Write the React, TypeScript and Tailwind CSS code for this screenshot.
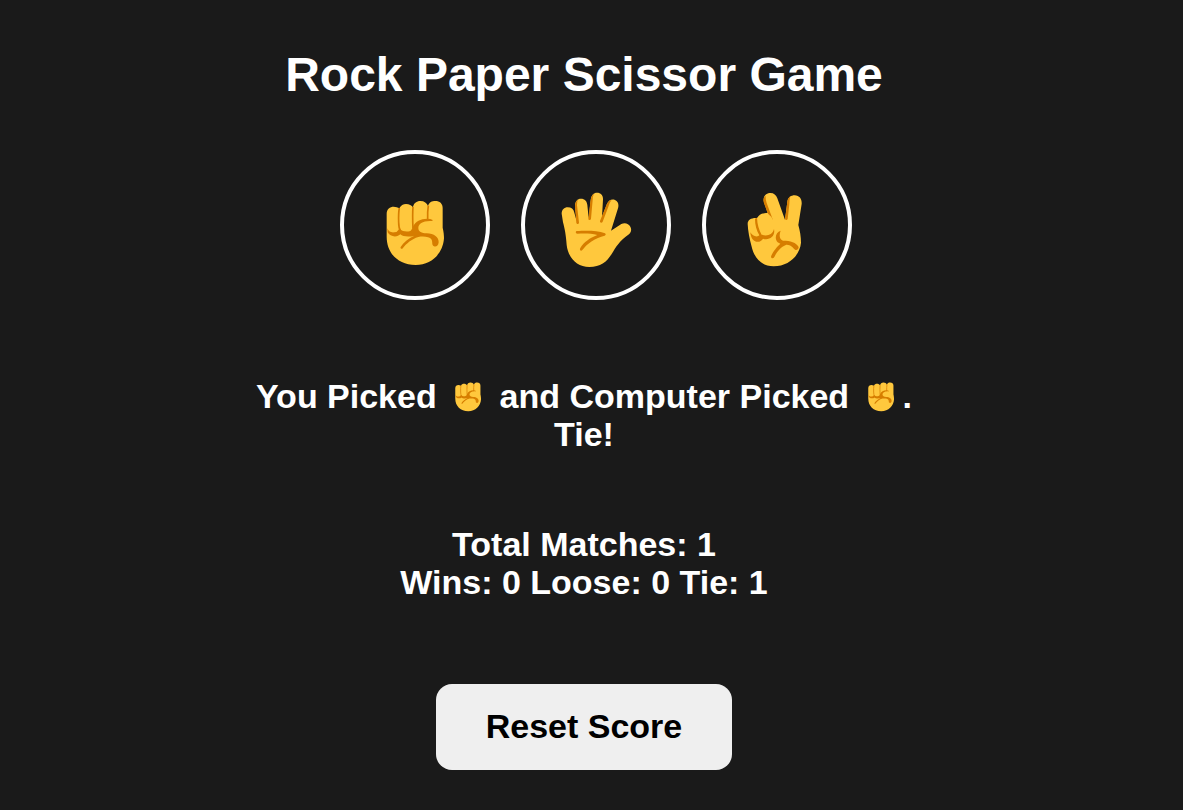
import { useState } from "react";

type Move = "rock" | "paper" | "scissor";

const MOVES: Move[] = ["rock", "paper", "scissor"];

const BEATS: Record<Move, Move> = { rock: "scissor", paper: "rock", scissor: "paper" };

function Rock() {
  return (
    <>
      <path
        fill="#ffc83d"
        d="M155 207C155 192 165 185 176 185Q186 185 193 190C197 181 205 177 213 177C223 177 230 181 234 187C235 175 245 168 256 168C268 168 276 174 279 183C282 172 291 168 301 168C314 168 323 176 323 189L323 248C326 260 327 272 327 280C324 325 290 360 242 360C190 360 155 325 155 275Z"
      />
      <path
        fill="none"
        stroke="#d67d00"
        strokeWidth="5"
        d="M193 189Q190 205 191 232Q191 250 197 260M234 186Q232 210 234 250M280 182Q277 200 278 226"
      />
      <path
        fill="#d67d00"
        d="M157 250C160 260 168 263 178 262Q187 262 192 253L196 253C202 261 225 262 229 255L235 243C242 230 256 221 277 221Q287 221 293 225L292 228C265 226 250 235 250 249C250 260 260 265 275 265C297 265 312 277 311 292C310 303 303 306 297 304C289 301 294 291 289 283C284 275 265 273 250 276C230 282 215 295 202 311C199 313 195 309 197 306C205 292 220 280 238 272C222 277 203 275 196 268C188 277 165 277 158 262Z"
      />
    </>
  );
}

function Paper() {
  return (
    <>
      <path
        fill="#ffc83d"
        d="M137 206C137 194 145 187 155 187C166 187 173 192 175 203L182 228L177 183C177 169 184 161 195 161C206 161 213 168 214 180L218 220L224 165C226 150 233 143 243 143C255 143 262 152 261 164L258 215L273 176C278 166 287 161 297 165C307 169 309 179 306 190L285 257L316 237C327 231 338 236 343 245C348 254 345 263 337 269C311 287 300 305 287 327C272 351 253 366 220 366C182 366 156 337 152 300C150 270 146 250 141 232Z"
      />
      <path
        fill="#d67d00"
        d="M186 164C178 169 177 178 177 188L181 233C182 238 188 238 189 233L183 181Q182 171 186 164ZM234 146C226 151 225 160 223 172L217 221C217 226 224 226 225 221L230 165Q230 153 234 146ZM287 164C278 167 274 173 271 181L252 228C251 234 258 235 260 230L277 185Q280 173 287 164Z"
      />
      <path
        fill="#d67d00"
        d="M183 258C205 257 242 255 267 265Q272 269 266 272C238 279 214 295 199 315C195 320 189 315 193 309C204 291 221 279 244 270C223 264 202 265 184 266C178 266 178 258 183 258Z"
      />
    </>
  );
}

function Scissor() {
  return (
    <>
      <path
        fill="#ffc83d"
        d="M152 237C152 224 163 218 180 219C187 208 195 204 212 204L201 172C196 155 207 144 220 144C231 144 237 150 241 160L264 224L271 170C273 157 282 151 293 151C308 152 315 162 314 177L304 240C309 258 312 275 312 293C308 332 275 364 230 364C195 364 172 340 164 305C157 280 153 258 152 237Z"
      />
      <path
        fill="#d67d00"
        d="M206 152C197 160 199 170 202 178L213 206Q224 213 229 228L209 174Q205 162 206 152ZM280 154C272 160 271 169 270 179L264 223Q269 227 272 222L277 178Q277 164 280 154ZM174 221L180 218C181 239 186 254 193 268L188 272C178 256 174 239 174 221Z"
      />
      <path
        fill="#d67d00"
        d="M160 262C168 277 185 278 190 267C204 275 226 273 231 252C236 275 216 287 198 281C190 296 162 296 160 262ZM251 257C237 261 231 280 242 292L250 296C240 305 226 322 222 335C223 341 229 341 232 336C240 320 250 306 268 299C280 298 288 308 294 314C300 317 305 312 305 306C298 292 280 287 258 287C245 282 247 267 251 257Z"
      />
    </>
  );
}

function Hand({ move, className }: { move: Move; className: string }) {
  return (
    <svg viewBox="120 132 240 240" className={className} role="img" aria-label={move}>
      {move === "rock" && <Rock />}
      {move === "paper" && <Paper />}
      {move === "scissor" && <Scissor />}
    </svg>
  );
}

export default function App() {
  const [picks, setPicks] = useState<[Move, Move] | null>(["rock", "rock"]);
  const [score, setScore] = useState({ wins: 0, losses: 0, ties: 1 });

  function play(mine: Move) {
    const theirs = MOVES[Math.floor(Math.random() * MOVES.length)];
    setPicks([mine, theirs]);
    setScore((s) => {
      if (mine === theirs) return { ...s, ties: s.ties + 1 };
      return BEATS[mine] === theirs ? { ...s, wins: s.wins + 1 } : { ...s, losses: s.losses + 1 };
    });
  }

  function reset() {
    setPicks(null);
    setScore({ wins: 0, losses: 0, ties: 0 });
  }

  let result = "";
  if (picks) {
    const [mine, theirs] = picks;
    result = mine === theirs ? "Tie!" : BEATS[mine] === theirs ? "You Win!" : "You Loose!";
  }

  return (
    <main className="flex min-h-screen flex-col items-center bg-[#1a1a1a] pt-[47px] pr-[15px] pb-10 text-center font-['Liberation_Sans',Arial,sans-serif] text-[34px] leading-[38px] font-bold text-white">
      <h1 className="text-5xl leading-[56px]">Rock Paper Scissor Game</h1>
      <div className="mt-[47px] flex gap-[31px] pl-6">
        {MOVES.map((move) => (
          <button
            key={move}
            type="button"
            aria-label={move}
            onClick={() => play(move)}
            className="flex size-[150px] cursor-pointer items-center justify-center rounded-full border-4 border-white pt-2"
          >
            <Hand move={move} className="size-20" />
          </button>
        ))}
      </div>
      <div className="mt-[77px] min-h-[76px]" aria-live="polite">
        {picks && (
          <>
            <p>
              You Picked <Hand move={picks[0]} className="mx-1 inline-block size-9 align-top" /> and
              Computer Picked <Hand move={picks[1]} className="mx-1 inline-block size-9 align-top" />.
            </p>
            <p>{result}</p>
          </>
        )}
      </div>
      <div className="mt-[72px]">
        <p>Total Matches: {score.wins + score.losses + score.ties}</p>
        <p>
          Wins: {score.wins} Loose: {score.losses} Tie: {score.ties}
        </p>
      </div>
      <button
        type="button"
        onClick={reset}
        className="mt-[83px] cursor-pointer rounded-2xl bg-[#efefef] px-[50px] pt-[23px] pb-[25px] text-black"
      >
        Reset Score
      </button>
    </main>
  );
}
